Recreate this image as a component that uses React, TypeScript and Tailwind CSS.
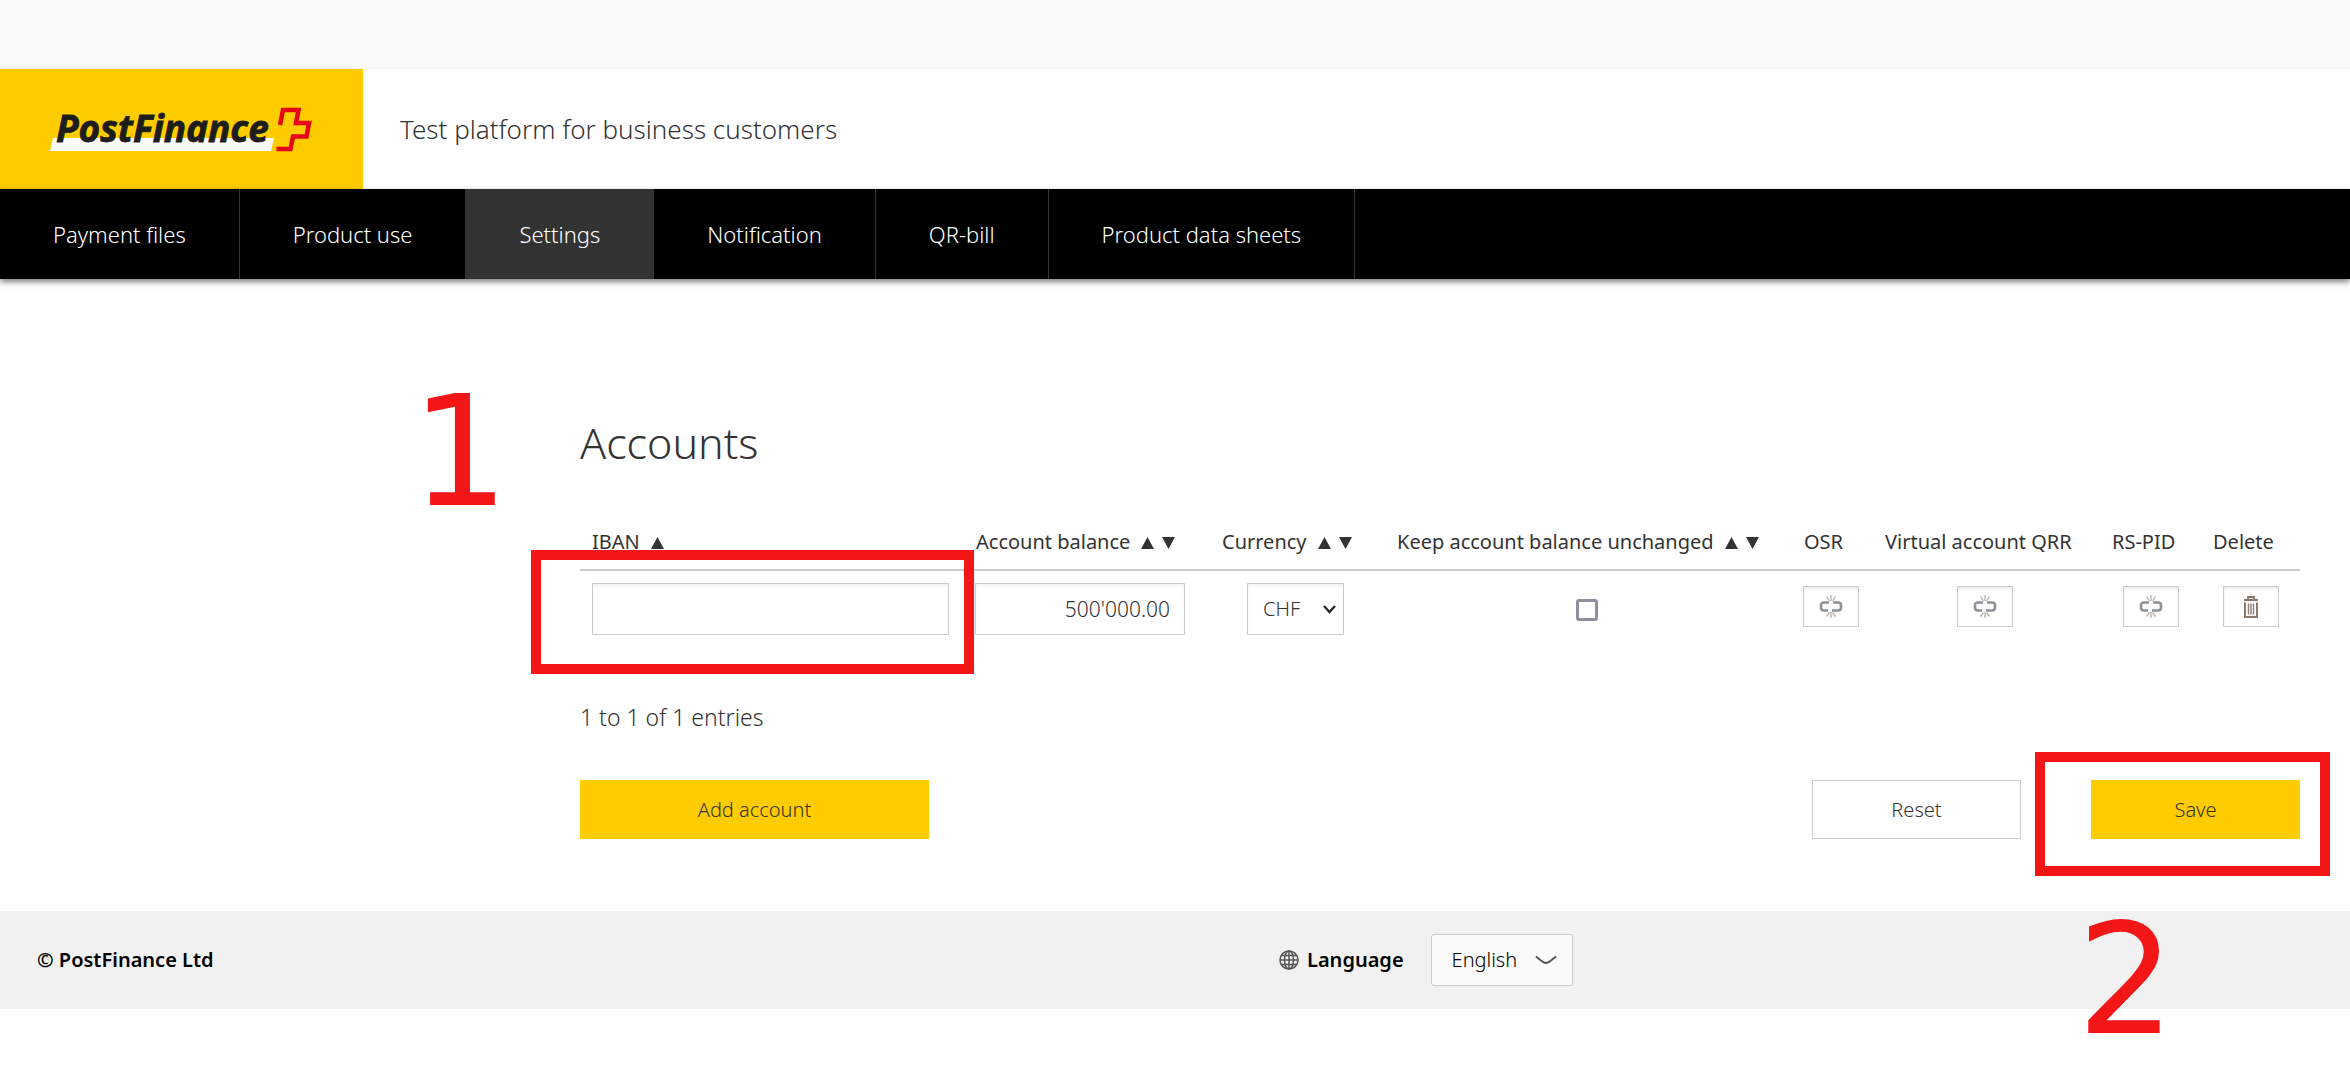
import React, { useState } from 'react';

const navItems = ['Payment files', 'Product use', 'Settings', 'Notification', 'QR-bill', 'Product data sheets'];

const columns = [
  { label: 'IBAN', sort: '▲', width: '' },
  { label: 'Account balance', sort: '▲▼', width: 'w-[246px]' },
  { label: 'Currency', sort: '▲▼', width: 'w-[175px]' },
  { label: 'Keep account balance unchanged', sort: '▲▼', width: 'w-[407px]' },
  { label: 'OSR', sort: '', width: 'w-[81px]' },
  { label: 'Virtual account QRR', sort: '', width: 'w-[227px]' },
  { label: 'RS-PID', sort: '', width: 'w-[101px]' },
  { label: 'Delete', sort: '', width: 'w-[99px]' },
];

const Logo: React.FC = () => (
  <svg className="overflow-visible" width="264" height="46" viewBox="0 0 264 46" role="img" aria-label="PostFinance">
    <path d="M3 32H224L221 45H0Z" fill="#fff" />
    <text
      x="6"
      y="36"
      fontFamily="Noto Sans"
      fontSize="37"
      fontWeight="700"
      fontStyle="italic"
      fill="#1d1d1b"
      stroke="#1d1d1b"
      strokeWidth="0.8"
    >
      PostFinance
    </text>
    <path
      d="M230 19L233 4H248.500L246 17H259L256.500 30.500H243L240.500 43H226.500"
      fill="none"
      stroke="#e60514"
      strokeWidth="4.500"
    />
  </svg>
);

const SortArrows: React.FC<{ dirs: string }> = ({ dirs }) => (
  <span className="ml-[11px] inline-flex gap-2">
    {dirs.split('').map((dir) => (
      <svg key={dir} width="13" height="12" viewBox="0 0 13 12" fill="#333">
        <path d={dir === '▲' ? 'M6.500 0L13 12H0Z' : 'M0 0H13L6.500 12Z'} />
      </svg>
    ))}
  </span>
);

const BrokenLinkIcon: React.FC = () => (
  <svg width="24" height="24" viewBox="0 0 24 24" fill="none">
    <path d="M10 7.500H5Q2 7.500 2 10V12.500Q2 15.500 5 15.500H9" stroke="#8c9196" strokeWidth="2.600" />
    <path d="M14 7.500H19Q22 7.500 22 10V12.500Q22 15.500 19 15.500H13" stroke="#8c9196" strokeWidth="2.600" />
    <path
      d="M12 0V6M7.500 1.500L10.500 6M16.500 1.500L13.500 6M12 17V23M7.500 21.500L10.500 17.500M16.500 21.500L13.500 17.500"
      stroke="#b5b0ab"
      strokeWidth="1.300"
    />
  </svg>
);

const TrashIcon: React.FC = () => (
  <svg width="16" height="22" viewBox="0 0 16 22" fill="none" stroke="#8a7a6d">
    <path d="M5 3.500V1H11V3.500" strokeWidth="1.800" />
    <path d="M1 4H15" strokeWidth="2.200" />
    <path d="M2 6.500V21H14V6.500" strokeWidth="2" />
    <path d="M5.500 7.500V18.500M8 7.500V18.500M10.500 7.500V18.500" strokeWidth="1.400" />
  </svg>
);

const IconButton: React.FC<{ label: string; children: React.ReactNode }> = ({ label, children }) => (
  <button
    type="button"
    aria-label={label}
    className="inline-flex h-[41px] w-14 items-center justify-center border border-[#ccc] bg-white shadow-[inset_0_2px_3px_rgba(0,0,0,0.08)]"
  >
    {children}
  </button>
);

const App: React.FC = () => {
  const [iban, setIban] = useState('');
  const [balance, setBalance] = useState("500'000.00");
  const [keepBalance, setKeepBalance] = useState(false);

  return (
    <div className="min-h-screen bg-white font-['Noto_Sans',sans-serif] font-[350] text-[#333]">
      <div className="h-[69px] border-b border-[#f2f2f2] bg-[#fafafa]" />

      <header className="flex h-[120px] items-center">
        <a href="#home" className="flex h-full w-[363px] items-center justify-center bg-[#ffcc00]">
          <Logo />
        </a>
        <p className="ml-[37px] text-[26px]">Test platform for business customers</p>
      </header>

      <nav className="relative flex h-[90px] bg-black text-[22px] text-white shadow-[0_3px_6px_rgba(0,0,0,0.5)]">
        {navItems.map((item) => (
          <a
            key={item}
            href="#nav"
            className={`flex items-center border-r border-[#333] px-[53px] ${item === 'Settings' ? 'bg-[#333]' : ''}`}
          >
            {item}
          </a>
        ))}
      </nav>

      <main className="mr-[50px] ml-[580px] pt-[132px] pb-[72px]">
        <h1 className="text-[43px] leading-[64px]">Accounts</h1>

        <div className="relative mt-[41px]">
          <table className="w-full table-fixed border-collapse">
            <thead>
              <tr className="h-[54px] border-b-2 border-[#ccc]">
                {columns.map((col) => (
                  <th
                    key={col.label}
                    className={`pb-0.5 pl-3 text-left text-[20px] font-normal whitespace-nowrap ${col.width}`}
                  >
                    {col.label}
                    {col.sort && <SortArrows dirs={col.sort} />}
                  </th>
                ))}
              </tr>
            </thead>
            <tbody>
              <tr className="h-[76px] text-center align-middle">
                <td className="pr-[15px] pl-3">
                  <input
                    type="text"
                    aria-label="IBAN"
                    value={iban}
                    onChange={(e) => setIban(e.target.value)}
                    className="block h-[52px] w-full border border-[#ccc] px-4 text-[20px] shadow-[inset_0_2px_3px_rgba(0,0,0,0.05)]"
                  />
                </td>
                <td className="pl-[11px]">
                  <input
                    type="text"
                    aria-label="Account balance"
                    value={balance}
                    onChange={(e) => setBalance(e.target.value)}
                    className="block h-[52px] w-[210px] border border-[#ccc] px-[14px] text-right text-[21px] shadow-[inset_0_2px_3px_rgba(0,0,0,0.05)]"
                  />
                </td>
                <td className="pr-1">
                  <div className="relative inline-block align-middle">
                    <select
                      aria-label="Currency"
                      className="block h-[52px] w-[97px] appearance-none border border-[#ccc] pl-[15px] text-[20px] shadow-[inset_0_2px_3px_rgba(0,0,0,0.05)]"
                    >
                      <option>CHF</option>
                      <option>EUR</option>
                    </select>
                    <svg className="pointer-events-none absolute top-[22px] right-2" width="13" height="9" viewBox="0 0 13 9" fill="none">
                      <path d="M1 1L6.500 7L12 1" stroke="#222" strokeWidth="2.200" />
                    </svg>
                  </div>
                </td>
                <td className="pr-1">
                  <input
                    type="checkbox"
                    aria-label="Keep account balance unchanged"
                    checked={keepBalance}
                    onChange={(e) => setKeepBalance(e.target.checked)}
                    className="h-[22px] w-[22px] appearance-none rounded-[3px] border-[3px] border-[#8f8f9d] align-middle checked:bg-[#8f8f9d]"
                  />
                </td>
                <td className="pr-1 pb-1">
                  <IconButton label="OSR"><BrokenLinkIcon /></IconButton>
                </td>
                <td className="pr-1 pb-1">
                  <IconButton label="Virtual account QRR"><BrokenLinkIcon /></IconButton>
                </td>
                <td className="pb-1">
                  <IconButton label="RS-PID"><BrokenLinkIcon /></IconButton>
                </td>
                <td className="pb-1">
                  <IconButton label="Delete"><TrashIcon /></IconButton>
                </td>
              </tr>
            </tbody>
          </table>

          {/* step 1: IBAN field */}
          <div className="pointer-events-none absolute top-[34px] -left-[49px] h-[124px] w-[443px] border-10 border-[#f31616]">
            <span className="absolute -top-[185px] -left-[130px] font-['DejaVu_Sans',sans-serif] text-[154px] leading-none font-normal text-[#f31616]">
              1
            </span>
          </div>
        </div>

        <p className="mt-[55px] text-[23px] leading-8">1 to 1 of 1 entries</p>

        <div className="mt-[47px] flex items-center text-[20px]">
          <button type="button" className="h-[59px] w-[349px] bg-[#ffcc00]">Add account</button>
          <button type="button" className="mr-[70px] ml-auto h-[59px] w-[209px] border border-[#ccc] bg-white">Reset</button>
          <div className="relative">
            <button type="button" className="block h-[59px] w-[209px] bg-[#ffcc00]">Save</button>
            {/* step 2: save */}
            <div className="pointer-events-none absolute -top-7 -left-14 h-[124px] w-[295px] border-10 border-[#f31616]">
              <span className="absolute top-[141px] left-8 font-['DejaVu_Sans',sans-serif] text-[154px] leading-none font-normal text-[#f31616]">
                2
              </span>
            </div>
          </div>
        </div>
      </main>

      <footer className="grid h-[98px] grid-cols-[1279fr_1071fr] items-center bg-[#f1f1f1] text-[20px] text-black">
        <p className="pl-[37px] font-semibold">© PostFinance Ltd</p>
        <div className="flex items-center">
          <svg width="20" height="20" viewBox="0 0 20 20" fill="none" stroke="#555" strokeWidth="1.500">
            <circle cx="10" cy="10" r="9" />
            <ellipse cx="10" cy="10" rx="4.500" ry="9" />
            <path d="M10 1V19M1 10H19M2.500 5.500H17.500M2.500 14.500H17.500" />
          </svg>
          <label htmlFor="language" className="ml-2 font-semibold">Language</label>
          <div className="relative ml-[27px]">
            <select
              id="language"
              className="block h-[52px] w-[142px] appearance-none rounded-[3px] border border-[#ccc] bg-[#fafafa] pl-5 text-[20px]"
            >
              <option>English</option>
              <option>Deutsch</option>
              <option>Français</option>
              <option>Italiano</option>
            </select>
            <svg className="pointer-events-none absolute top-[21px] right-4" width="22" height="10" viewBox="0 0 22 10" fill="none">
              <path d="M1 1.500C5 4.500 8 8 11 8C14 8 17 4.500 21 1.500" stroke="#555" strokeWidth="2" />
            </svg>
          </div>
        </div>
      </footer>
    </div>
  );
};

export default App;
